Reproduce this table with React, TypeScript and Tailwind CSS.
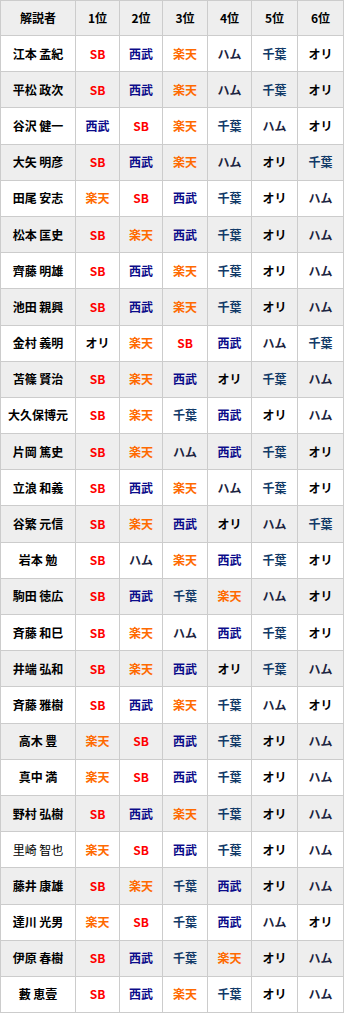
const teamColor: Record<string, string> = {
  SB: "text-[#ff0000]",
  西武: "text-[#0b0b8a]",
  楽天: "text-[#ff6a00]",
  ハム: "text-[#1c2340]",
  千葉: "text-[#123a68]",
  オリ: "text-black",
};

const rows: [string, string[]][] = [
  ["江本 孟紀", ["SB", "西武", "楽天", "ハム", "千葉", "オリ"]],
  ["平松 政次", ["SB", "西武", "楽天", "ハム", "千葉", "オリ"]],
  ["谷沢 健一", ["西武", "SB", "楽天", "千葉", "ハム", "オリ"]],
  ["大矢 明彦", ["SB", "西武", "楽天", "ハム", "オリ", "千葉"]],
  ["田尾 安志", ["楽天", "SB", "西武", "千葉", "オリ", "ハム"]],
  ["松本 匡史", ["SB", "楽天", "西武", "千葉", "オリ", "ハム"]],
  ["齊藤 明雄", ["SB", "西武", "楽天", "千葉", "オリ", "ハム"]],
  ["池田 親興", ["SB", "西武", "楽天", "千葉", "オリ", "ハム"]],
  ["金村 義明", ["オリ", "楽天", "SB", "西武", "ハム", "千葉"]],
  ["苫篠 賢治", ["SB", "楽天", "西武", "オリ", "千葉", "ハム"]],
  ["大久保博元", ["SB", "楽天", "千葉", "西武", "オリ", "ハム"]],
  ["片岡 篤史", ["SB", "楽天", "ハム", "西武", "千葉", "オリ"]],
  ["立浪 和義", ["SB", "西武", "楽天", "ハム", "千葉", "オリ"]],
  ["谷繁 元信", ["SB", "楽天", "西武", "オリ", "ハム", "千葉"]],
  ["岩本 勉", ["SB", "ハム", "楽天", "西武", "千葉", "オリ"]],
  ["駒田 徳広", ["SB", "西武", "千葉", "楽天", "ハム", "オリ"]],
  ["斉藤 和巳", ["SB", "楽天", "ハム", "西武", "千葉", "オリ"]],
  ["井端 弘和", ["SB", "楽天", "西武", "オリ", "千葉", "ハム"]],
  ["斉藤 雅樹", ["SB", "西武", "楽天", "千葉", "ハム", "オリ"]],
  ["高木 豊", ["楽天", "SB", "西武", "千葉", "オリ", "ハム"]],
  ["真中 満", ["楽天", "SB", "西武", "千葉", "オリ", "ハム"]],
  ["野村 弘樹", ["SB", "西武", "楽天", "千葉", "オリ", "ハム"]],
  ["里崎 智也", ["楽天", "SB", "西武", "千葉", "オリ", "ハム"]],
  ["藤井 康雄", ["SB", "楽天", "千葉", "西武", "オリ", "ハム"]],
  ["達川 光男", ["楽天", "SB", "千葉", "西武", "ハム", "オリ"]],
  ["伊原 春樹", ["SB", "西武", "千葉", "楽天", "オリ", "ハム"]],
  ["藪 恵壹", ["SB", "西武", "楽天", "千葉", "オリ", "ハム"]],
];

const headers = ["解説者", "1位", "2位", "3位", "4位", "5位", "6位"];

export default function App() {
  return (
    <div className="min-h-screen bg-white font-['Noto_Sans_CJK_JP','Liberation_Sans',sans-serif] text-[12px] font-bold text-black">
      <div className="grid w-[344px] grid-cols-[74px_43px_42px_44px_43px_45px_45px] auto-rows-[35.19px] grid-rows-[34px] gap-px bg-[#cccccc] p-px">
        {headers.map((h) => (
          <div key={h} className="flex items-center justify-center bg-[#eeeeee]">
            {h}
          </div>
        ))}
        {rows.map(([name, teams], i) => {
          const bg = i % 2 === 0 ? "bg-white" : "bg-[#eeeeee]";
          return [
            <div
              key={name}
              className={`flex items-center justify-center ${bg} ${name === "里崎 智也" ? "font-normal" : ""}`}
            >
              {name}
            </div>,
            ...teams.map((t, j) => (
              <div
                key={name + j}
                className={`flex items-center justify-center ${bg} ${teamColor[t]}`}
              >
                {t}
              </div>
            )),
          ];
        })}
      </div>
    </div>
  );
}
